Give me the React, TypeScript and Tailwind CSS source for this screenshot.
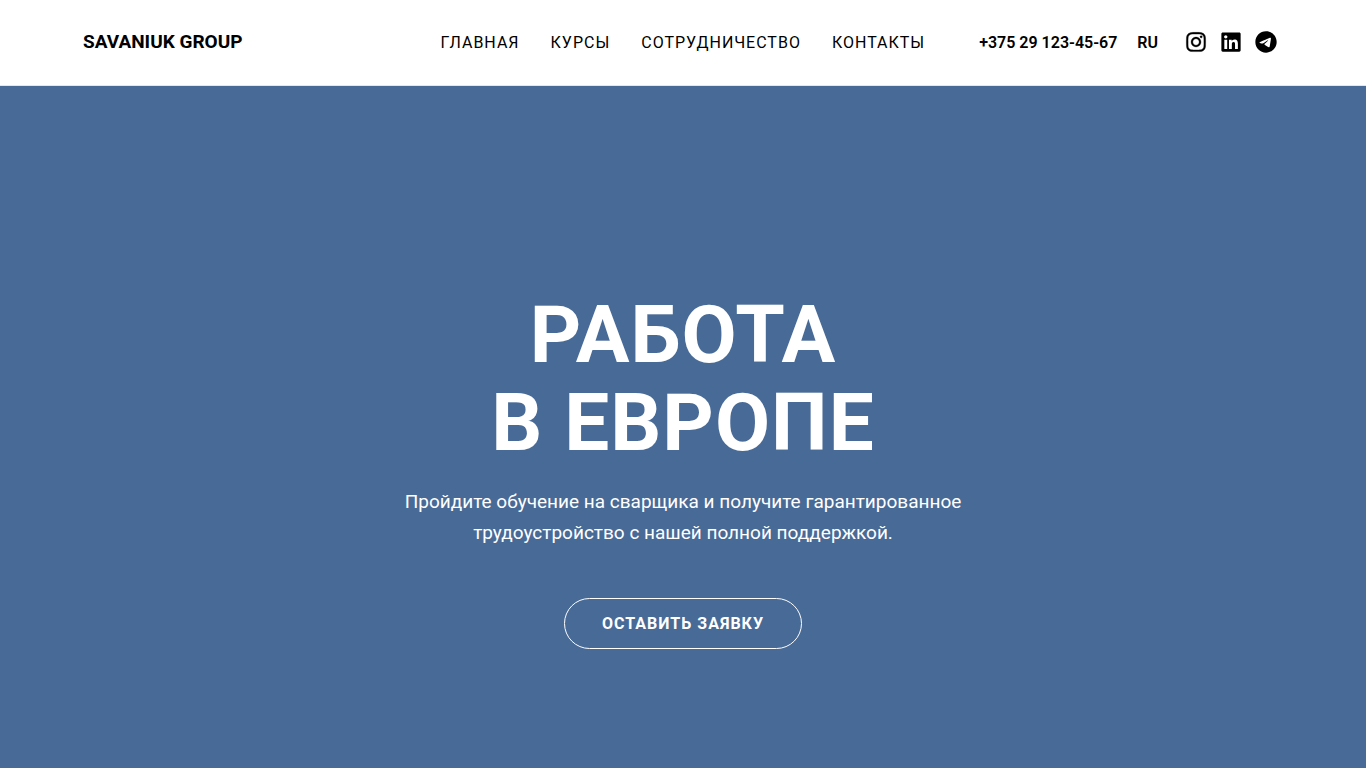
import { FaInstagram, FaLinkedin } from "react-icons/fa";
import { FaTelegram } from "react-icons/fa6";

const links = [
  { href: "#main", label: "Главная" },
  { href: "#courses", label: "Курсы" },
  { href: "#partners", label: "Сотрудничество" },
  { href: "#contacts", label: "Контакты" },
];

export default function App() {
  return (
    <div className="flex min-h-screen flex-col bg-white font-['Roboto',sans-serif] text-black">
      <Header />
      <Hero />
    </div>
  );
}

function Header() {
  return (
    <header className="border-b border-gray-200">
      <div className="mx-auto flex w-full max-w-[1200px] items-center justify-between pt-7 pb-[29px]">
        <a href="#main" className="text-[19px] leading-7 font-bold uppercase">
          Savaniuk Group
        </a>
        <div className="flex items-end">
          <nav className="flex gap-[31px] text-base tracking-[1px] uppercase">
            {links.map((link) => (
              <a key={link.href} href={link.href}>
                {link.label}
              </a>
            ))}
          </nav>
          <a href="tel:+375291234567" className="ml-[54px] text-base font-semibold">
            +375 29 123-45-67
          </a>
          <button type="button" className="ml-5 text-base font-semibold">
            RU
          </button>
          <div className="mr-[6px] ml-[27px] flex h-[26px] items-center gap-[13px]">
            <a href="#instagram" aria-label="Instagram">
              <FaInstagram className="size-[22px] stroke-[8]" />
            </a>
            <a href="#linkedin" aria-label="LinkedIn">
              <FaLinkedin className="size-[22px]" />
            </a>
            <a href="#telegram" aria-label="Telegram">
              <FaTelegram className="size-[22px]" />
            </a>
          </div>
        </div>
      </div>
    </header>
  );
}

function Hero() {
  return (
    <main className="flex flex-1 flex-col items-center bg-[#486a97] px-5 pt-[205px] pb-20 text-center text-white">
      <h1 className="text-[80px] leading-[88px] font-bold tracking-[1px] uppercase">
        Работа
        <br />в Европе
      </h1>
      <p className="mt-[19px] max-w-[600px] text-[19px] leading-[31px]">
        Пройдите обучение на сварщика и получите гарантированное трудоустройство с нашей полной поддержкой.
      </p>
      <button
        type="button"
        className="mt-[50px] rounded-full border border-white px-[37px] py-3 text-base leading-[25px] font-bold tracking-[1px] uppercase"
      >
        Оставить заявку
      </button>
    </main>
  );
}
